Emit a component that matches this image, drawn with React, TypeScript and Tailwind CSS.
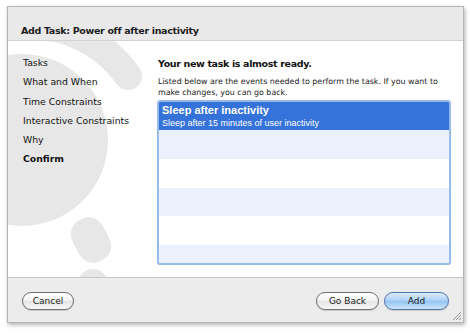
const steps = [
  { label: "Tasks", current: false },
  { label: "What and When", current: false },
  { label: "Time Constraints", current: false },
  { label: "Interactive Constraints", current: false },
  { label: "Why", current: false },
  { label: "Confirm", current: true },
];

// alternating rows under the selected one
const emptyRows = [true, false, true, false, true];

function Watermark() {
  return (
    <svg
      className="pointer-events-none absolute left-0 top-0"
      width="457"
      height="237"
      viewBox="0 0 457 237"
    >
      <g fill="#e7e7e7">
        <circle cx="14" cy="99" r="86" />
        <path
          d="M 1 -14 A 120 120 0 0 1 120 35"
          fill="none"
          stroke="#e7e7e7"
          strokeWidth="28"
          strokeLinecap="round"
        />
        <rect x="66" y="176" width="34" height="46" rx="16" transform="rotate(-28 83 199)" />
        <circle cx="85" cy="243" r="15" />
      </g>
    </svg>
  );
}

function PillButton({ label, primary, width }: { label: string; primary?: boolean; width: string }) {
  return (
    <button
      type="button"
      className={`flex h-[18px] items-center justify-center rounded-full border text-[9px] font-medium leading-none text-[#1a1a1a] shadow-[0_1px_1px_rgba(0,0,0,0.15)] ${width} ${
        primary
          ? "border-[#4f76ad] bg-[linear-gradient(#dcecfb,#a9d0f6_50%,#93c3f3_51%,#cfe6fc)]"
          : "border-[#6f6f6f] bg-[linear-gradient(#ffffff,#f1f1f1_50%,#e4e4e4_51%,#f7f7f7)]"
      }`}
    >
      {label}
    </button>
  );
}

export default function App() {
  return (
    <div className="h-[336px] w-[470px] bg-white pl-[7px] pt-[6px] font-['Lucida_Grande','DejaVu_Sans',sans-serif]">
      <div className="flex h-[317px] w-[457px] flex-col overflow-hidden border border-[#b4b4b4] bg-[#ececec] shadow-[1px_2px_4px_rgba(0,0,0,0.3)]">
        <div className="flex h-[34px] shrink-0 items-end border-b border-[#d2d2d2] bg-[#e9e9e9] pb-[2px] pl-[13px]">
          <span className="text-[9.5px] font-bold tracking-[-0.33px] text-[#1c1c1c]">
            Add Task: Power off after inactivity
          </span>
        </div>

        <div className="relative flex h-[237px] shrink-0 overflow-hidden border-b border-[#c6c6c6] bg-white">
          <Watermark />

          <nav className="relative flex w-[150px] shrink-0 flex-col pl-[15px] pt-[15px]">
            {steps.map((s) => (
              <div
                key={s.label}
                className={`h-[19.3px] text-[9.3px] leading-[14px] text-[#111] ${
                  s.current ? "font-bold" : ""
                }`}
              >
                {s.label}
              </div>
            ))}
          </nav>

          <section className="relative flex flex-1 flex-col pr-[12px] pt-[16px]">
            <h1 className="text-[9.5px] font-bold leading-[14px] tracking-[-0.35px] text-[#111]">
              Your new task is almost ready.
            </h1>
            <p className="mt-[5px] text-[7.9px] leading-[11px] text-[#222]">
              Listed below are the events needed to perform the task. If you want to make changes,
              you can go back.
            </p>
            <div className="ml-[-1px] mt-[2px] h-[165px] overflow-hidden rounded-[3px] border-2 border-[#95bbe6] bg-white">
              <div className="flex h-[28px] flex-col justify-center bg-[#3572d9] pl-[3px] font-['Liberation_Sans',Arial,sans-serif] text-white">
                <div className="text-[11px] font-bold leading-[13px]">Sleep after inactivity</div>
                <div className="text-[9px] leading-[12px]">
                  Sleep after 15 minutes of user inactivity
                </div>
              </div>
              {emptyRows.map((blue, i) => (
                <div
                  key={i}
                  className={`h-[28.8px] ${blue ? "bg-[#ecf2fd]" : "bg-white"}`}
                />
              ))}
            </div>
          </section>
        </div>

        <div className="relative flex flex-1 items-center justify-between px-[14px] pt-[2px]">
          <PillButton label="Cancel" width="w-[52px]" />
          <div className="flex gap-[5px]">
            <PillButton label="Go Back" width="w-[63px]" />
            <PillButton label="Add" primary width="w-[65px]" />
          </div>
          <svg
            className="absolute bottom-[2px] right-[2px]"
            width="9"
            height="9"
            viewBox="0 0 9 9"
          >
            <g stroke="#9a9a9a" strokeWidth="1">
              <line x1="1" y1="9" x2="9" y2="1" />
              <line x1="4" y1="9" x2="9" y2="4" />
              <line x1="7" y1="9" x2="9" y2="7" />
            </g>
          </svg>
        </div>
      </div>
    </div>
  );
}
